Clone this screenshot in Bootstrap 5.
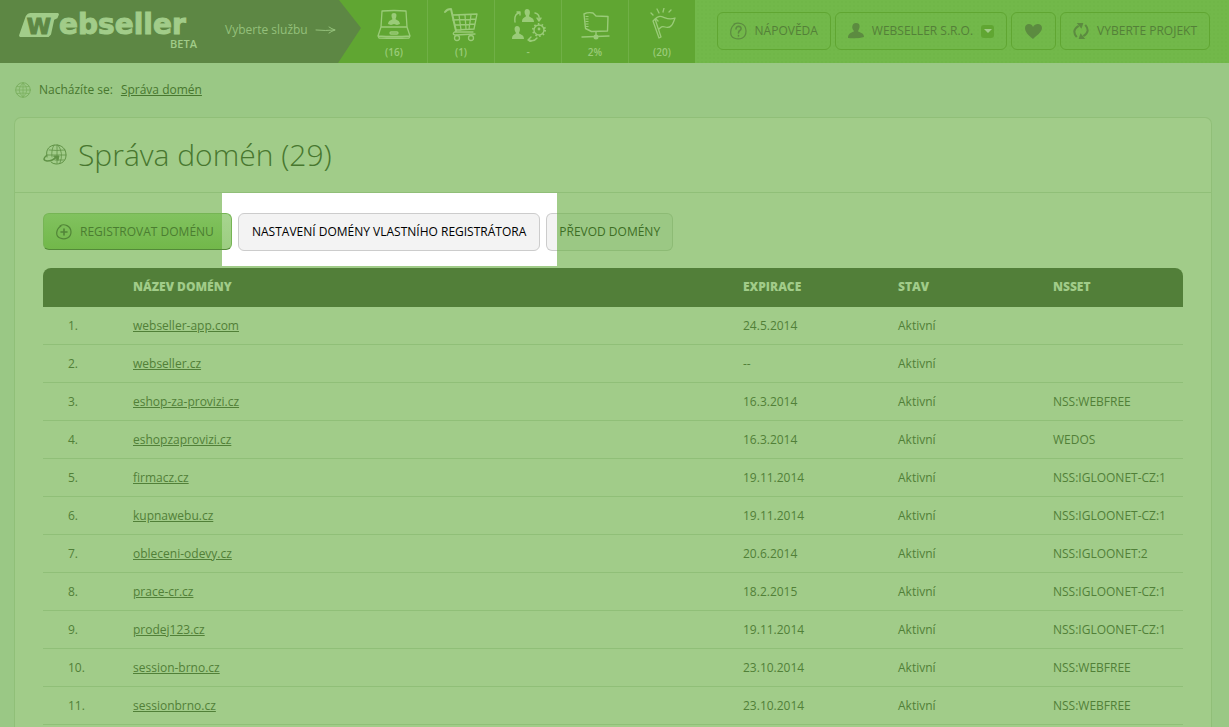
<!DOCTYPE html>
<html lang="cs">
<head>
<meta charset="utf-8">
<meta name="viewport" content="width=device-width, initial-scale=1">
<title>Webseller – Správa domén</title>
<link href="https://cdn.jsdelivr.net/npm/bootstrap@5.3.0/dist/css/bootstrap.min.css" rel="stylesheet">
<style>
:root{--ink:#48772f;--mid:#5d8744;--pale:#a1cc89;--line:#90bf78;--leaf:#60a632}
body{font-family:"Open Sans","Noto Sans",sans-serif;font-size:12px;line-height:18px;color:var(--ink);background:#9ac885}
a{color:inherit}
svg{display:block;flex:none;fill:none;stroke:currentColor;stroke-linecap:round;stroke-linejoin:round}
.topbar{height:63px;background-color:#72b84a;background-image:radial-gradient(#70b648 1px,transparent 1px);background-size:4px 4px}
.brand-area{width:361px;background:var(--mid);color:var(--pale);clip-path:polygon(0 0,339px 0,100% 28px,338px 100%,0 100%);padding-left:19px}
.brand-wrap{background:var(--leaf)}
.brand-link{width:180px;height:36px;margin-top:13px;text-decoration:none}
.brand-mark{width:40px;height:24px;background:var(--pale);color:var(--mid);clip-path:polygon(17% 12%,22% 3%,28% 0,98% 0,100% 6%,96% 22%,88% 28%,80% 90%,74% 100%,2% 100%,0 94%);font:bold 22px/28px "DejaVu Sans",sans-serif;text-align:center;-webkit-text-stroke:1px var(--mid)}
.brand-name{font:bold 28px/24px "DejaVu Sans",sans-serif;-webkit-text-stroke:1px var(--pale)}
.brand-beta{font-size:11px;line-height:12px;font-weight:600;right:2px;bottom:-1px}
.pick{font-size:12px;line-height:20px;font-weight:400;color:#94c07b;margin-left:26px;margin-top:20px;gap:7px}
.service{width:67px;background:var(--leaf);color:#9acb78;border-right:1px solid #70b046;text-decoration:none;font-size:10px;line-height:14px;font-weight:600;padding-top:8px}
.service:last-child{width:66px;border-right:0}
.service svg{margin-bottom:3px}
.tool{height:38px;border:1px solid var(--leaf);border-radius:6px;color:#548038;background:transparent;font-size:12px;padding:0 12px}
.tool svg{color:#5c8b40}
.tool-fav{width:45px}
.tools{gap:4px;padding-right:19px;padding-bottom:1px}
.caret{width:13px;height:13px;border-radius:3px;background:var(--leaf)}
.crumbs{height:54px;padding-left:15px;gap:8px}
.crumbs svg{color:#7bb060}
.panel{margin:0 17px 0 14px;border:1px solid var(--line);border-bottom:0;border-radius:7px 7px 0 0;background:#a1cc89}
.panel-head{height:75px;padding-left:28px;border-bottom:1px solid var(--line);gap:11px}
.panel-head svg{color:#609246}
.panel-head h1{font-size:30px;line-height:40px;font-weight:300}
.panel-body{padding:20px 28px 0}
.actions{gap:6px;margin-bottom:17px}
.act{height:38px;border:1px solid transparent;border-radius:6px;font-size:12px;padding:0 12px;position:relative;z-index:1}
.act-main{height:37px;gap:8px;width:189px;border-color:#76b555;border-bottom-color:#548a39;background:linear-gradient(90deg,transparent calc(100% - 9px),#ffffff4d 0),linear-gradient(#81c25f,#72b84a);color:#4b7d31}
.act-main svg{color:#528538}
.spot{z-index:0}
.spot::before{content:"";position:absolute;inset:-20px -17px -15px -16px;background:#fff}
.act-focus{background:#f3f3f3;border-color:#ccc;color:#000;padding:0 13px}
.act-plain{background:linear-gradient(90deg,#f3f3f3 10px,#9bc884 0) padding-box,linear-gradient(90deg,#ccc 11px,#8dbb75 0) border-box;color:#3d6e25}
.domains{table-layout:fixed;width:100%;border-collapse:separate;border-spacing:0;color:#518038}
.domains th{height:39px;background:#527f39;color:var(--pale);font-weight:800;padding:0 0 2px 15px}
.domains th:first-child{border-top-left-radius:8px}
.domains th:last-child{border-top-right-radius:8px}
.domains td{height:38px;border-bottom:1px solid var(--line);padding:0 0 0 15px}
.domains td:first-child{padding-left:25px}
.c-num{width:75px}.c-mid{width:155px}.c-ns{width:145px}
</style>
</head>
<body class="d-flex flex-column min-vh-100">
<header class="topbar d-flex flex-shrink-0">
  <div class="brand-wrap"><div class="brand-area d-flex h-100">
    <a class="brand-link d-flex position-relative" href="#"><span class="brand-mark">W</span><span class="brand-name">ebseller</span><span class="brand-beta position-absolute">BETA</span></a>
    <div class="pick d-flex align-items-center align-self-start"><span>Vyberte službu</span>
      <svg width="22" height="10" viewBox="0 0 22 10"><path d="M1 5q9 1 19 0M14 2q3 2 6 3q-3 1-6 3"/></svg></div>
  </div></div>
  <nav class="d-flex" aria-label="Služby">
    <a class="service d-flex flex-column align-items-center" href="#">
      <svg width="36" height="34" viewBox="0 0 36 34" stroke-width="1.300"><path d="M5 19 6 3q12-1 24 0l1 16M5 19h26l3 9q-16 1-32 0zM2 28l1 2q16 .5 30 0l1-2"/><rect x="14" y="24" width="8" height="2" rx="1"/><path fill="currentColor" stroke="none" d="M18 5c3 0 3 3 1.500 6 1 1.500 4 1 4.500 5l-3 1-3-1-3 1-3-1c.5-4 3.500-3.500 4.500-5C15 8 15 5 18 5"/></svg>(16)</a>
    <a class="service d-flex flex-column align-items-center" href="#">
      <svg width="36" height="34" viewBox="0 0 36 34" stroke-width="1.300"><path stroke-width="2" d="M2 4q2-3 6-3l5 22"/><path d="m10 7 24-1-3 15-18 1M10 12l23-1M12 17l20-1M16 7l2 15M22 7l1 14M28 7l-2 14M13 23q-5 3-1 4l20-1M12 24h18"/><circle cx="14" cy="30" r="2.500"/><circle cx="28" cy="30" r="2.500"/></svg>(1)</a>
    <a class="service d-flex flex-column align-items-center" href="#">
      <svg width="36" height="34" viewBox="0 0 36 34" stroke-width="1.400"><g fill="currentColor" stroke="none"><path id="man" d="M17 1c3.500 0 3.500 4 2 7 1 2 5 1 5 6H12c0-5 3-4 4-6-2-3-2-7 1-7"/><use href="#man" x="-10" y="17"/></g><path d="M5 14q-1-8 4-9M7 4h3v3M25 5q5 1 4 7M27 10l2 3 2-3M27 30q-3 4-8 2M21 29l-3 3 3 2"/><circle cx="29" cy="22" r="5"/><circle cx="29" cy="22" r="6" stroke-dasharray="1.500 2.270" stroke-linecap="butt" stroke-width="2"/><circle cx="29" cy="21" r=".7"/></svg>-</a>
    <a class="service d-flex flex-column align-items-center" href="#">
      <svg width="36" height="34" viewBox="0 0 36 34" stroke-width="1.400"><path d="M7 6q4-2 9-1l3 3 12 .5-.5 14.500-16 .5-6-3z"/><path stroke-dasharray="1 1.500" stroke-linecap="butt" stroke-width="3" d="M10 8v12"/><path d="M19 24v4M5 29l27-1"/><circle cx="19" cy="29" r="1.800" fill="currentColor"/></svg>2%</a>
    <a class="service d-flex flex-column align-items-center" href="#">
      <svg width="36" height="34" viewBox="0 0 36 34" stroke-width="1.300"><path d="m9 13 6 17 2-1-6-18zM11 11c7-7 10 3 20-1-2 6-4 11-10 9-3-1-4 0-6 2M12 11l2 2M7 5l2 2M13 1l2 4M20 0l-1 4M27 2l-2 2"/></svg>(20)</a>
  </nav>
  <div class="tools d-flex align-items-center ms-auto">
    <button class="tool d-flex align-items-center" type="button">
      <svg class="me-2" width="17" height="18" viewBox="0 0 17 18" stroke-width="1.200"><path d="M4 2C8 0 16 1 16 9s-7 9-12 7S0 5 5 2"/><path d="M6 7c0-4 6-3 5 0-.5 2-2.500 1-2.500 4M8.500 13.500v.5" stroke-width="1.600"/></svg>NÁPOVĚDA</button>
    <button class="tool d-flex align-items-center" type="button">
      <svg class="me-2" width="16" height="16" viewBox="0 0 16 16"><path fill="currentColor" stroke="none" d="M8 0c5 0 4 5 2 8 1 2 6 1 6 6q-6 2-16 1c0-6 5-5 6-7C3 5 4 0 8 0"/></svg>WEBSELLER S.R.O.
      <span class="caret d-flex align-items-center justify-content-center ms-2"><svg width="8" height="4" viewBox="0 0 8 4"><path fill="#a1cc89" stroke="none" d="M0 0h8L4 4z"/></svg></span></button>
    <button class="tool tool-fav d-flex align-items-center justify-content-center" type="button" aria-label="Oblíbené">
      <svg width="17" height="15" viewBox="0 0 17 15"><path fill="currentColor" stroke="none" d="M8 3c2-4 9-4 9 1 0 4-6 8-9 11C4 12 0 8 0 4c0-5 7-5 8-1"/></svg></button>
    <button class="tool d-flex align-items-center" type="button">
      <svg class="me-2" width="16" height="16" viewBox="0 0 17 17" stroke-width="2.200"><path stroke-linecap="butt" d="M4 15Q-2 8 6 3M13 2q6 7-2 12"/><path fill="currentColor" stroke="none" d="M4 0h7l-2 6zM13 17H6l2-6z"/></svg>VYBERTE PROJEKT</button>
  </div>
</header>

<nav class="crumbs d-flex align-items-center flex-shrink-0" aria-label="Drobečková navigace">
  <svg width="16" height="16" viewBox="0 0 16 16"><circle cx="8" cy="8" r="7.300"/><path stroke-width=".8" d="M8 1v14M1 8h14M2 4.500q6 1 12 0M2 11.500q6-1 12 0M8 1q-8 7 0 14M8 1q8 7 0 14"/></svg>
  <span>Nacházíte se:</span><a href="#">Správa domén</a>
</nav>

<main class="panel flex-grow-1">
  <div class="panel-head d-flex align-items-center">
    <svg width="24" height="22" viewBox="0 0 24 22"><path d="M4 13C2 5 7 1 13 1s10 4 10 10-4 9-10 9q-3 0-5-2"/><path stroke-width=".8" d="M6 6q7 1 16 0M5 11h18M12 16h9M11 1q-3 5-2 12M14 1v18M15 1q6 8 2 18"/><path stroke-width="1.500" d="M4 11q-6 5 0 6 6 0 9-4"/><path fill="currentColor" d="m11 12 5 0-1 4z"/></svg>
    <h1 class="m-0">Správa domén (29)</h1>
  </div>
  <div class="panel-body">
    <div class="actions d-flex">
      <button class="act act-main d-flex align-items-center" type="button"><svg width="16" height="16" viewBox="0 0 16 16" stroke-width="1.200"><path d="M4 2C8-1 15 2 15 8s-6 8-11 6S0 5 5 2"/><path stroke-width="1.600" d="M8 5v6M5 8h6"/></svg>REGISTROVAT DOMÉNU</button>
      <div class="spot position-relative"><button class="act act-focus" type="button">NASTAVENÍ DOMÉNY VLASTNÍHO REGISTRÁTORA</button></div>
      <button class="act act-plain" type="button">PŘEVOD DOMÉNY</button>
    </div>
    <table class="domains">
      <colgroup><col class="c-num"><col><col class="c-mid"><col class="c-mid"><col class="c-ns"></colgroup>
      <thead><tr><th></th><th scope="col">NÁZEV DOMÉNY</th><th scope="col">EXPIRACE</th><th scope="col">STAV</th><th scope="col">NSSET</th></tr></thead>
      <tbody>
      <tr><td>1.</td><td><a href="#">webseller-app.com</a></td><td>24.5.2014</td><td>Aktivní</td><td></td></tr>
      <tr><td>2.</td><td><a href="#">webseller.cz</a></td><td>--</td><td>Aktivní</td><td></td></tr>
      <tr><td>3.</td><td><a href="#">eshop-za-provizi.cz</a></td><td>16.3.2014</td><td>Aktivní</td><td>NSS:WEBFREE</td></tr>
      <tr><td>4.</td><td><a href="#">eshopzaprovizi.cz</a></td><td>16.3.2014</td><td>Aktivní</td><td>WEDOS</td></tr>
      <tr><td>5.</td><td><a href="#">firmacz.cz</a></td><td>19.11.2014</td><td>Aktivní</td><td>NSS:IGLOONET-CZ:1</td></tr>
      <tr><td>6.</td><td><a href="#">kupnawebu.cz</a></td><td>19.11.2014</td><td>Aktivní</td><td>NSS:IGLOONET-CZ:1</td></tr>
      <tr><td>7.</td><td><a href="#">obleceni-odevy.cz</a></td><td>20.6.2014</td><td>Aktivní</td><td>NSS:IGLOONET:2</td></tr>
      <tr><td>8.</td><td><a href="#">prace-cr.cz</a></td><td>18.2.2015</td><td>Aktivní</td><td>NSS:IGLOONET-CZ:1</td></tr>
      <tr><td>9.</td><td><a href="#">prodej123.cz</a></td><td>19.11.2014</td><td>Aktivní</td><td>NSS:IGLOONET-CZ:1</td></tr>
      <tr><td>10.</td><td><a href="#">session-brno.cz</a></td><td>23.10.2014</td><td>Aktivní</td><td>NSS:WEBFREE</td></tr>
      <tr><td>11.</td><td><a href="#">sessionbrno.cz</a></td><td>23.10.2014</td><td>Aktivní</td><td>NSS:WEBFREE</td></tr>
      </tbody>
    </table>
  </div>
</main>
<script src="https://cdn.jsdelivr.net/npm/bootstrap@5.3.0/dist/js/bootstrap.bundle.min.js"></script>
</body>
</html>
